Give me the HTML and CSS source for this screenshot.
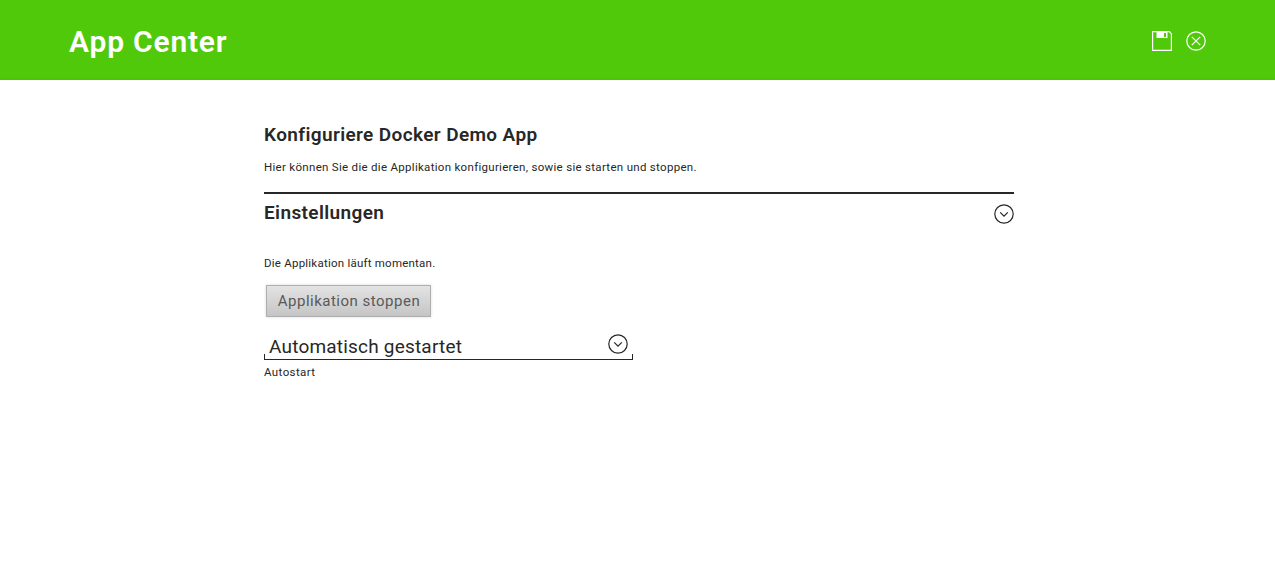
FILE: index.html
```html
<!DOCTYPE html>
<html lang="de">
<head>
<meta charset="utf-8">
<title>App Center</title>
<link rel="stylesheet" href="styles.css">
</head>
<body>
<header class="header">
  <h1 class="header-title"><span>App Center</span></h1>
  <div class="header-actions">
    <svg class="icon" viewBox="0 0 20 20"><path d="M.6.6h16.9l1.9 2.4v16.4H.6z" fill="none" stroke="currentColor" stroke-width="1.2"/><path fill="currentColor" fill-rule="evenodd" d="M4.5 1h11v6h-11zM12 2v4h2V2z"/></svg>
    <svg class="icon" viewBox="0 0 20 20"><g fill="none" stroke="currentColor" stroke-width="1.2"><circle cx="10" cy="10" r="9.2"/><path d="M5.8 5.8l8.4 8.4M14.2 5.8l-8.4 8.4"/></g></svg>
  </div>
</header>
<main class="content">
  <h2 class="page-title"><span>Konfiguriere Docker Demo App</span></h2>
  <p class="text intro"><span>Hier können Sie die die Applikation konfigurieren, sowie sie starten und stoppen.</span></p>
  <section class="section">
    <div class="section-head">
      <h2 class="section-title"><span>Einstellungen</span></h2>
      <svg class="icon section-toggle" viewBox="0 0 20 20"><g fill="none" stroke="currentColor" stroke-width="1.2"><circle cx="10" cy="10" r="9.2"/><path d="M6.2 8.3l3.8 3.8 3.8-3.8"/></g></svg>
    </div>
    <p class="text status"><span>Die Applikation läuft momentan.</span></p>
    <button class="button" type="button"><span>Applikation stoppen</span></button>
    <div class="select">
      <span class="select-value">Automatisch gestartet</span>
      <svg class="icon" viewBox="0 0 20 20"><g fill="none" stroke="currentColor" stroke-width="1.2"><circle cx="10" cy="10" r="9.2"/><path d="M6.2 8.3l3.8 3.8 3.8-3.8"/></g></svg>
    </div>
    <div class="text select-label"><span>Autostart</span></div>
  </section>
</main>
</body>
</html>
```
FILE: styles.css
```css
* { box-sizing: border-box; }
body {
  margin: 0;
  background: #fff;
  color: #272727;
  font-family: Roboto, "Liberation Sans", sans-serif;
}
h1, h2, p { margin: 0; }
.header {
  display: flex;
  align-items: center;
  justify-content: space-between;
  height: 80px;
  padding: 2px 69px 0;
  background: #50c90a;
  box-shadow: inset 0 -3px 3px -3px #48b80a;
  color: #fff;
}
.header-title { padding-top: 2px; font-size: 30px; line-height: 40px; font-weight: 600; letter-spacing: .8px; }
.header-actions { display: flex; gap: 14px; }
.icon { display: block; flex: none; width: 20px; height: 20px; }
.content { width: 750px; margin-left: 264px; padding-top: 42px; }
.page-title, .section-title { font-size: 19px; line-height: 26px; font-weight: 600; letter-spacing: .38px; }
.text { font-size: 11.5px; line-height: 16px; letter-spacing: .3px; }
.intro { margin-top: 11px; }
.section { margin-top: 17px; border-top: 2px solid #272727; padding-top: 6px; }
.section-head { display: flex; justify-content: space-between; align-items: flex-start; }
.section-toggle { margin-top: 4px; }
.status { margin-top: 29px; letter-spacing: .23px; }
.button {
  display: block;
  width: 165px;
  height: 32px;
  margin: 14px 0 0 2px;
  padding: 0 0 0 1px;
  border: 1px solid #aeaeae;
  background: linear-gradient(#e3e3e3, #c5c5c5);
  box-shadow: 0 0 3px #ddd;
  color: #595959;
  font: 15px/30px Roboto, "Liberation Sans", sans-serif;
  letter-spacing: .5px;
}
.select {
  display: flex;
  justify-content: space-between;
  width: 369px;
  height: 26px;
  margin-top: 17px;
  padding: 0 5px;
  background:
    linear-gradient(#272727, #272727) left bottom / 1px 6px no-repeat,
    linear-gradient(#272727, #272727) right bottom / 1px 6px no-repeat,
    linear-gradient(#272727, #272727) left bottom / 100% 1px no-repeat;
}
.select-value { font-size: 19px; line-height: 26px; letter-spacing: .2px; }
.select-label { margin-top: 4px; letter-spacing: .4px; }
```
